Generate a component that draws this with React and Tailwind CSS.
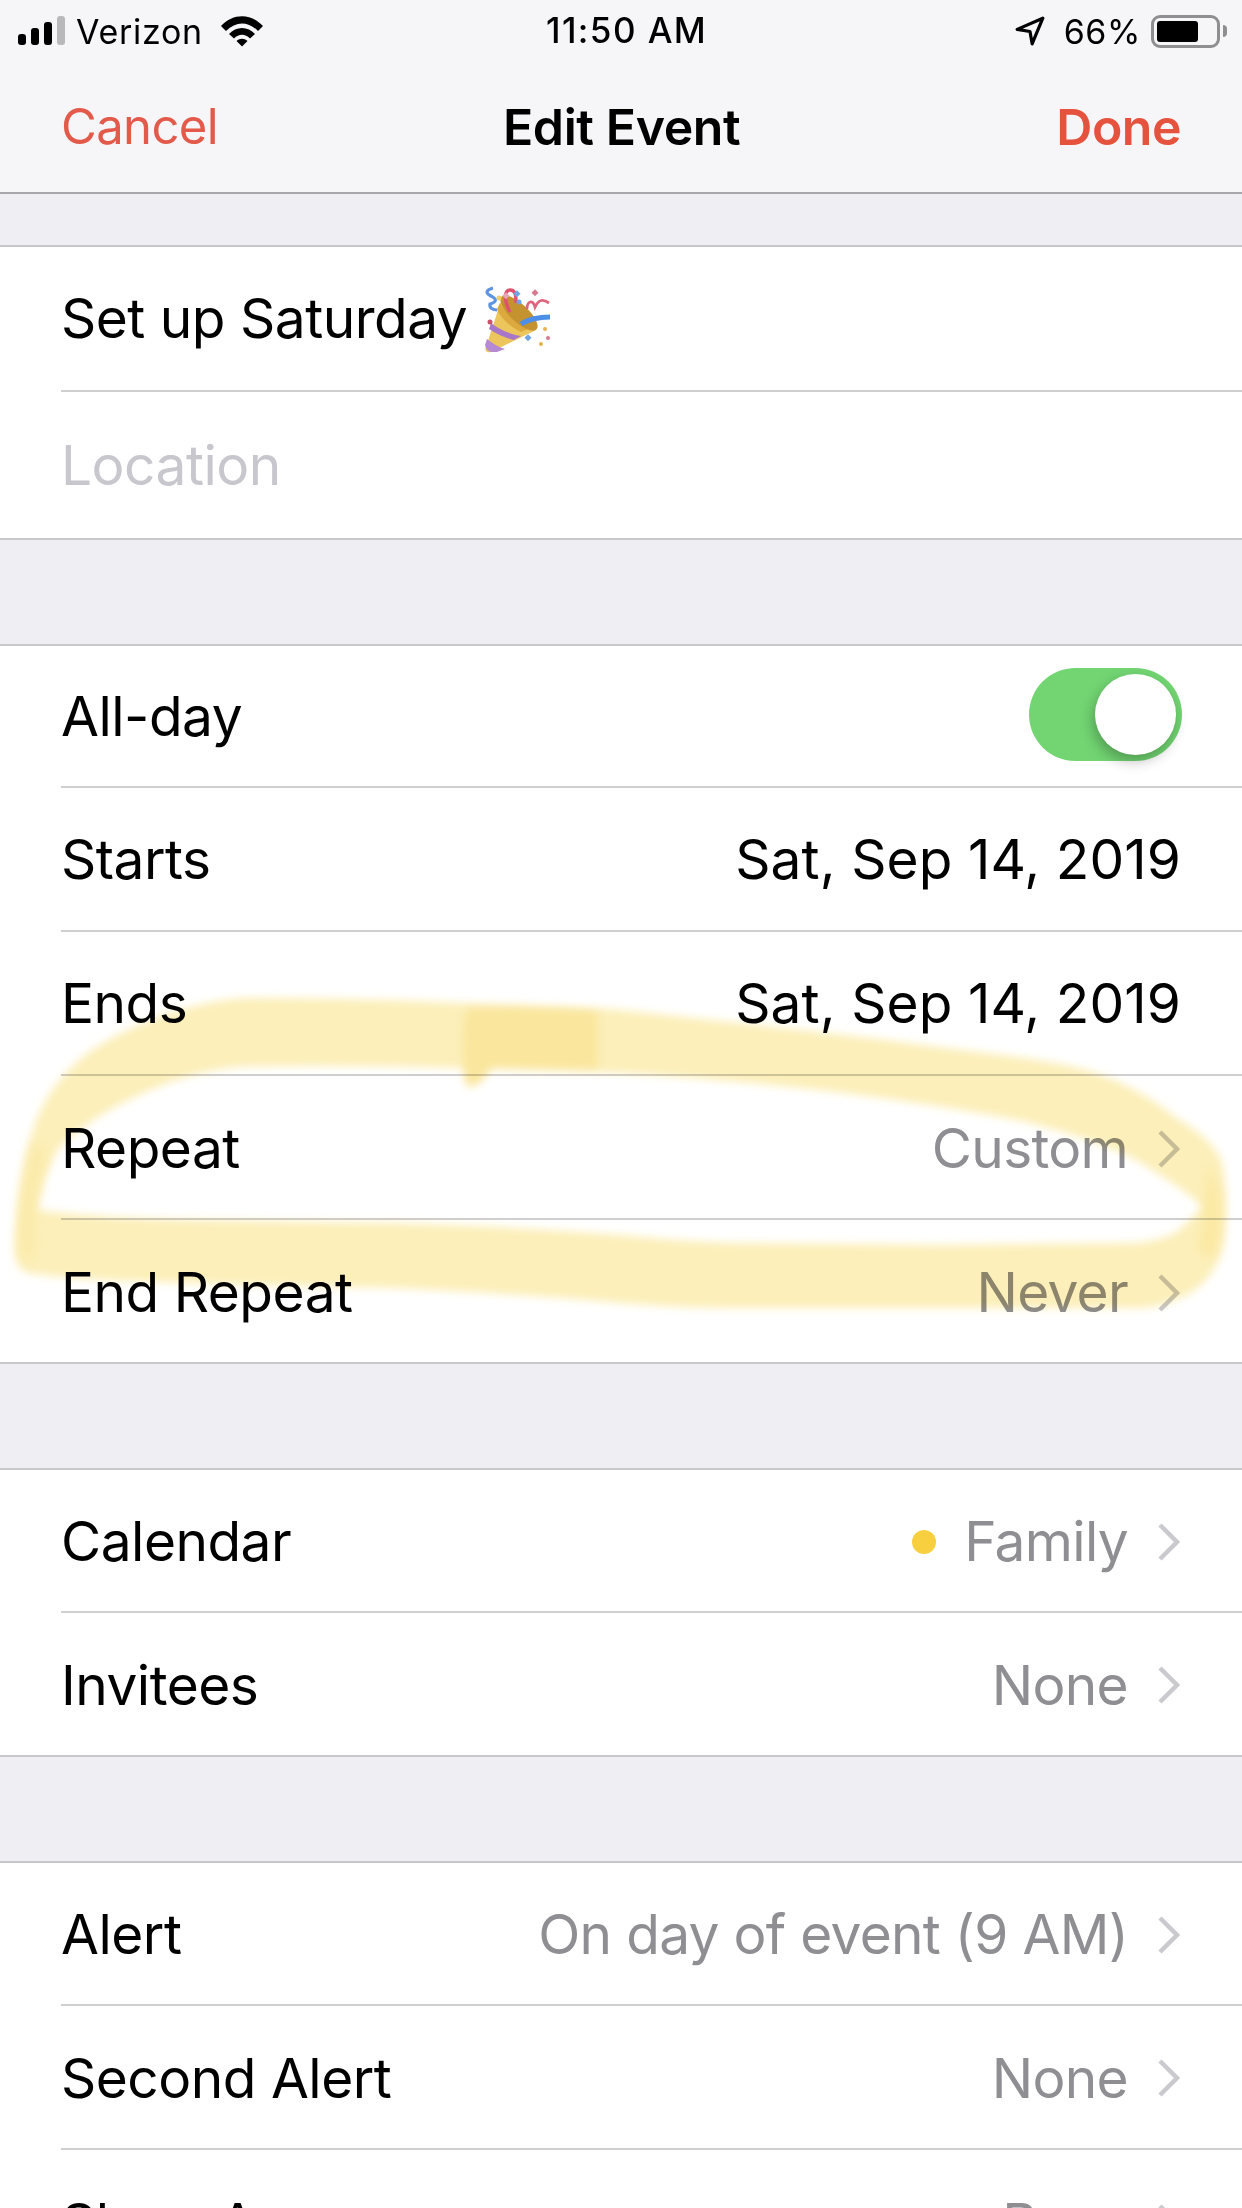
const Chevron = () => (
  <svg width="24" height="40" viewBox="0 0 24 40" className="shrink-0" fill="none">
    <path d="M3 3 L20 20 L3 37" stroke="#c9c9ce" strokeWidth="4.5" />
  </svg>
);

const Row = ({ label, value, h = "h-[144px]", last, chevron = true, dark, dot, labelClass = "text-black", shift = "" }) => (
  <div className={`${h} pl-[61px] bg-white`}>
    <div className={`h-full flex items-center justify-between pr-[61px] ${shift} ${last ? "" : "border-b-2 border-[#cfcfd2]"}`}>
      <span className={`text-[55px] tracking-[-0.5px] ${labelClass}`}>{label}</span>
      {value && (
        <div className="flex items-center">
          {dot && <span className="w-[24px] h-[24px] rounded-full bg-[#f8d03f] mr-[28px]" />}
          <span className={`text-[55px] ${dark ? "text-black tracking-[0.1px]" : "text-[#8e8e93] tracking-[-0.7px]"}`}>{value}</span>
          {chevron && <span className="ml-[29px] flex"><Chevron /></span>}
        </div>
      )}
    </div>
  </div>
);

const Section = ({ children }) => (
  <div className="border-y-2 border-[#c8c7cc] bg-white">{children}</div>
);

const Popper = () => (
  <svg width="68" height="68" viewBox="0 0 68 68" className="ml-[16px] shrink-0">
    <path d="M3 62 C1 66 4 68 8 67 L53 45 L19 13 Z" fill="#ecc65c" />
    <path d="M8 38 C16 44 28 50 38 51 L31 55 C22 53 12 48 6 44 Z" fill="#a977c9" />
    <path d="M2 60 L4 54 C9 58 15 62 22 64 L14 67 L8 67 C5 66 3 64 2 60 Z" fill="#b58ad2" />
    <path d="M14 24 C16 30 24 40 38 47 L45 44 C34 38 22 28 17 18 Z" fill="#dba93d" />
    <ellipse cx="36" cy="28" rx="9" ry="24" transform="rotate(-47 36 28)" fill="#c59230" />
    <path d="M10 3 C3 5 2 8 8 11 C14 14 14 17 7 19 C6 23 10 25 14 25" stroke="#5d95e2" strokeWidth="3.2" fill="none" />
    <path d="M27 27 C20 14 22 5 27 5 C33 5 33 12 33 18" stroke="#de5270" strokeWidth="3.4" fill="none" />
    <path d="M38 39 C46 34 56 32 67 32" stroke="#4d8fe8" strokeWidth="5" fill="none" />
    <path d="M44 24 C44 16 50 14 52 22 C56 14 60 14 66 18" stroke="#e0647e" strokeWidth="2.8" fill="none" />
    <circle cx="16" cy="13" r="2.5" fill="#edcf63" />
    <rect x="21" y="8" width="5" height="5" fill="#e8a7b5" transform="rotate(45 23 10)" />
    <rect x="32" y="6" width="5" height="5" fill="#6ea5e6" transform="rotate(45 34 8)" />
    <circle cx="36" cy="17" r="2.5" fill="#6ea5e6" />
    <rect x="50" y="5" width="5" height="5" fill="#d9798f" transform="rotate(45 52 7)" />
    <circle cx="7" cy="37" r="2.5" fill="#c9536a" />
    <rect x="43" y="50" width="5" height="5" fill="#6ea5e6" transform="rotate(45 45 52)" />
    <circle cx="62" cy="44" r="2" fill="#e8b24e" />
    <circle cx="65" cy="53" r="2" fill="#d9798f" />
    <circle cx="58" cy="59" r="2" fill="#e8b24e" />
  </svg>
);

const Highlight = () => (
  <svg className="absolute left-0 top-0 mix-blend-multiply pointer-events-none" width="1242" height="2208" viewBox="0 0 1242 2208" fill="none">
    <defs>
      <filter id="soft" x="-5%" y="-5%" width="110%" height="110%"><feGaussianBlur stdDeviation="4" /></filter>
      <filter id="softer" x="-20%" y="-20%" width="140%" height="140%"><feGaussianBlur stdDeviation="6" /></filter>
    </defs>
    <g filter="url(#soft)">
      <path
        fillRule="evenodd"
        fill="#fcefb9"
        d="M245 998 C320 998 400 1000 463 1003 C520 1005 570 1006 621 1010 C660 1014 700 1019 740 1023 C810 1031 870 1037 938 1047 C1000 1055 1055 1060 1096 1073 C1130 1085 1155 1100 1175 1117 C1205 1135 1220 1150 1223 1167 C1226 1190 1227 1207 1225 1227 C1224 1245 1222 1255 1215 1267 C1205 1285 1190 1295 1175 1300 C1160 1306 1150 1308 1136 1308 L938 1308 L740 1308 C690 1308 660 1306 621 1303 C540 1296 460 1291 396 1288 C310 1286 230 1285 158 1282 C110 1281 60 1278 28 1273 C20 1270 17 1265 16 1260 C14 1245 15 1235 16 1227 C18 1195 24 1160 32 1133 C42 1100 58 1080 79 1060 C100 1042 130 1028 158 1017 C190 1006 215 1000 245 998 Z
        M238 1067 C210 1070 185 1076 158 1087 C120 1102 85 1122 60 1147 C48 1165 40 1190 36 1210 C85 1216 140 1219 198 1220 C270 1221 330 1222 396 1223 C470 1225 545 1229 621 1235 C660 1239 700 1242 740 1243 L938 1245 L1136 1243 C1150 1242 1165 1238 1175 1233 C1185 1225 1195 1215 1203 1207 C1185 1190 1160 1175 1136 1160 C1100 1142 1060 1130 1017 1120 C950 1107 885 1098 819 1090 C755 1083 690 1077 621 1073 C570 1071 515 1070 463 1068 C390 1066 310 1065 238 1067 Z"
      />
      <path d="M471 1007 C515 1006 560 1007 598 1010 L598 1070 L492 1068 C485 1078 478 1086 470 1087 C463 1086 463 1070 463 1050 C463 1025 463 1010 471 1007 Z" fill="#fae69d" />
    </g>
    <g filter="url(#softer)">
      <path d="M34 1140 C26 1170 21 1200 20 1225 C19 1240 20 1250 22 1258 L34 1260 L35 1210 C38 1190 42 1170 46 1155 Z" fill="#fbeaa8" />
      <path d="M1208 1165 C1218 1180 1221 1200 1220 1225 C1219 1240 1216 1250 1212 1258 L1198 1250 C1202 1235 1205 1220 1205 1207 C1207 1190 1207 1180 1208 1165 Z" fill="#fbe8a0" />
    </g>
  </svg>
);

export default function App() {
  return (
    <div className="relative w-[1242px] h-[2208px] overflow-hidden bg-[#eeeef3] font-['Inter','Liberation_Sans',sans-serif]">
      <div className="h-[192px] bg-[#f6f6f9] border-b-2 border-[#a8a8ac] flex flex-col box-content">
        <div className="h-[62px] pl-[18px] pr-[15px] flex items-center justify-between relative">
          <div className="flex items-center">
            <svg width="48" height="30" viewBox="0 0 48 30" className="shrink-0">
              <rect x="0" y="18" width="8" height="11" rx="3" fill="#000" />
              <rect x="13" y="12" width="8" height="17" rx="3" fill="#000" />
              <rect x="26" y="6" width="8" height="23" rx="3" fill="#000" />
              <rect x="39" y="0" width="8" height="29" rx="3" fill="#b9b9bc" />
            </svg>
            <span className="ml-[10px] text-[34px] tracking-[0.7px] text-black">Verizon</span>
            <svg width="44" height="32" viewBox="0 0 44 32" className="ml-[17px] shrink-0">
              <path d="M1 11 C13 -2 31 -2 43 11 L38 16 C28 6 16 6 6 16 Z" fill="#000" />
              <path d="M9 19 C16 11 28 11 35 19 L30 23.5 C25 18.5 19 18.5 14 23.5 Z" fill="#000" />
              <path d="M16.5 26 C20 23 24 23 27.5 26 L22 31.5 Z" fill="#000" />
            </svg>
          </div>
          <span className="absolute left-[546px] top-[4px] text-[35px] font-medium tracking-[1.4px] text-black">11:50 AM</span>
          <div className="flex items-center">
            <svg width="32" height="32" viewBox="0 0 30 30" className="shrink-0">
              <path d="M27 3 L3 13.5 L15 15.5 L17 27 Z" fill="none" stroke="#000" strokeWidth="3" strokeLinejoin="round" />
            </svg>
            <span className="ml-[18px] text-[34px] tracking-[0.6px] text-black">66%</span>
            <div className="ml-[10px] w-[69px] h-[33px] rounded-[9px] border-[3px] border-[#8f8f92] p-[3px] flex">
              <div className="w-[41px] h-full bg-black rounded-[3px]" />
            </div>
            <div className="ml-[3px] w-[4px] h-[12px] rounded-r-[4px] bg-[#8f8f92]" />
          </div>
        </div>
        <div className="flex-1 pl-[61px] pr-[61px] flex items-center justify-between relative">
          <span className="text-[49px] tracking-[-0.6px] text-[#e35a4a] relative">Cancel</span>
          <span className="absolute left-[503px] text-[50px] font-semibold tracking-[-0.4px] text-black">Edit Event</span>
          <span className="text-[50px] font-semibold tracking-[-0.5px] text-[#e5533f]">Done</span>
        </div>
      </div>

      <div className="h-[51px]" />
      <Section>
        <div className="h-[145px] pl-[61px] bg-white">
          <div className="h-full flex items-center border-b-2 border-[#cfcfd2]">
            <span className="text-[55px] tracking-[-0.5px] text-black">Set up Saturday</span>
            <Popper />
          </div>
        </div>
        <Row h="h-[146px]" label="Location" labelClass="text-[#c7c7cd]" last />
      </Section>

      <div className="h-[104px]" />
      <Section>
        <div className="h-[142px] pl-[61px] bg-white">
          <div className="h-full flex items-center justify-between pr-[60px] border-b-2 border-[#cfcfd2]">
            <span className="text-[55px] tracking-[-0.5px] text-black">All-day</span>
            <div className="w-[153px] h-[93px] mb-[3px] rounded-full bg-[#72d572] relative">
              <div className="absolute right-[6px] top-[6px] w-[81px] h-[81px] rounded-full bg-white shadow-[-2px_6px_14px_rgba(0,0,0,0.28)]" />
            </div>
          </div>
        </div>
        <Row label="Starts" value="Sat, Sep 14, 2019" dark chevron={false} />
        <Row label="Ends" value="Sat, Sep 14, 2019" dark chevron={false} />
        <Row label="Repeat" value="Custom" shift="pt-[3px]" />
        <Row h="h-[142px]" label="End Repeat" value="Never" last shift="pt-[3px]" />
      </Section>

      <div className="h-[104px]" />
      <Section>
        <Row h="h-[143px]" label="Calendar" value="Family" dot shift="pt-[2px]" />
        <Row h="h-[142px]" label="Invitees" value="None" last shift="pt-[2px]" />
      </Section>

      <div className="h-[104px]" />
      <Section>
        <Row h="h-[143px]" label="Alert" value="On day of event (9 AM)" shift="pt-[2px]" />
        <Row label="Second Alert" value="None" shift="pt-[2px]" />
        <Row label="Show As" value="Busy" last shift="pt-[2px]" />
      </Section>

      <Highlight />
    </div>
  );
}
